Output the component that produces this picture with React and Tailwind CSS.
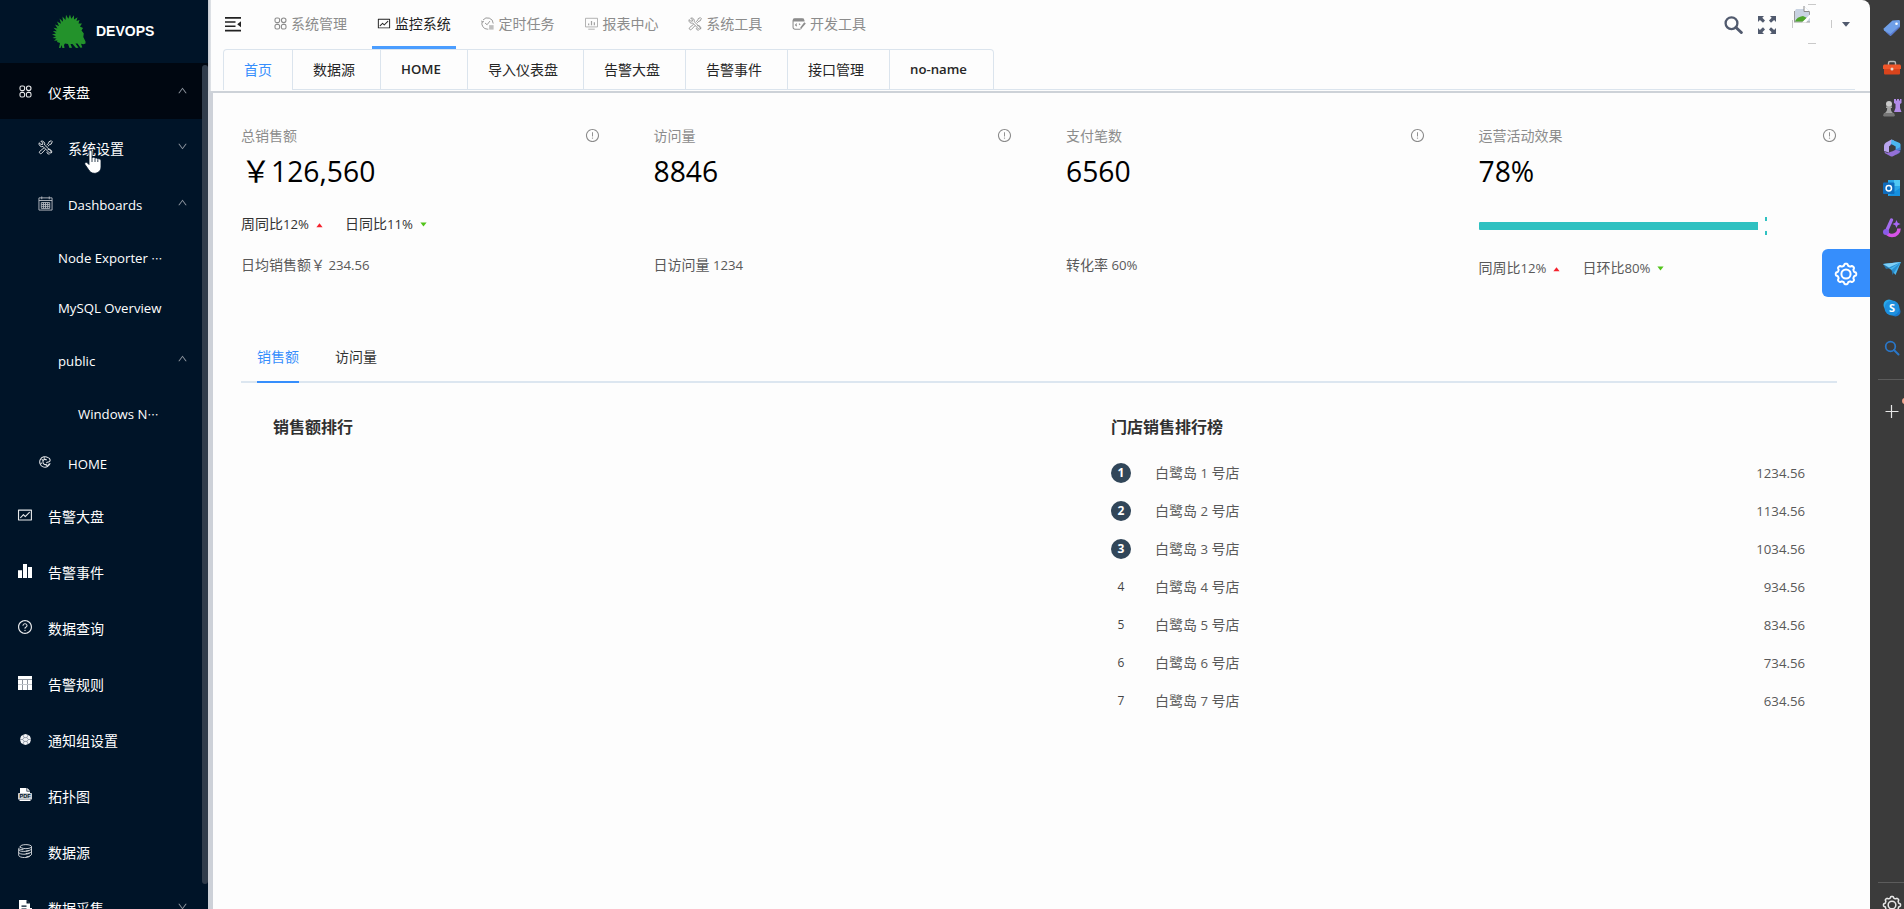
import React from "react";
import {
  AiOutlineFund,
  AiOutlineQuestionCircle,
  AiOutlineExclamationCircle,
  AiOutlineUp,
  AiOutlineDown,
} from "react-icons/ai";

/* Sets Latin runs slightly smaller than the surrounding Chinese characters. */
function T({ children }) {
  const parts = String(children).split(/([\x20-\x7e]+|\u2026)/);
  return (
    <span className="whitespace-pre">
      {parts.map((p, i) =>
        p === "\u2026" ? (
          <span key={i} className="font-['Noto_Sans_CJK_SC',sans-serif] text-[11px]" lang="zh-CN">{p}</span>
        ) : i % 2 ? (
          <span key={i} className="text-[0.943em]">{p}</span>
        ) : (
          p
        )
      )}
    </span>
  );
}

const Svg = ({ size = 14, children, className = "", box = 16, ...rest }) => (
  <svg width={size} height={size} viewBox={`0 0 ${box} ${box}`} fill="none" stroke="currentColor" className={className} {...rest}>
    {children}
  </svg>
);

const GEAR = (() => {
  let d = "";
  for (let i = 0; i < 160; i++) {
    const a = (i / 160) * Math.PI * 2;
    const r = 9.3 + 0.95 * Math.tanh(2.2 * Math.cos(8 * a));
    d += `${i ? "L" : "M"}${(12 + r * Math.sin(a)).toFixed(2)} ${(12 - r * Math.cos(a)).toFixed(2)}`;
  }
  return d + "Z";
})();
const Gear = ({ size, weight = 2 }) => (
  <Svg size={size} box={24} strokeWidth={weight} strokeLinejoin="round">
    <path d={GEAR} />
    <circle cx="12" cy="12" r="4.6" />
  </Svg>
);

const Clover = () => (
  <Svg size={13} box={13} strokeWidth="1.1">
    <rect x="1" y="1" width="4.600" height="4.600" rx="1.600" />
    <rect x="7.400" y="1" width="4.600" height="4.600" rx="2.300" />
    <rect x="1" y="7.400" width="4.600" height="4.600" rx="1.600" />
    <rect x="7.400" y="7.400" width="4.600" height="4.600" rx="1.600" />
  </Svg>
);
const Tools = ({ size = 14 }) => (
  <Svg size={size} strokeWidth="1">
    <path d="M5.4 6.900 12 13.600a1.200 1.200 0 0 0 1.800-1.700L7 5.300a3.100 3.100 0 0 0-3.900-4L5 3.200v1.500H3.200L1.200 3a3.200 3.200 0 0 0 4.200 3.900Z" />
    <path d="m9.200 5.600 2.100-2.300.4-1.500L14.200.800l1 1-1.200 2.600-1.500.4-2.100 2M6.400 8.300l-4.700 4a1.500 1.500 0 0 0 2 2.100l4.300-4.500" />
    <path d="M10.400 10.100a3 3 0 0 1 4 3.900M12.200 15.200a3 3 0 0 1-2.900-2.500" />
  </Svg>
);
const Calendar = () => (
  <Svg size={15} strokeWidth="1">
    <path d="M1 2h14v13H1zM1 4.800h14M4 .5v3M12 .5v3M3.500 7h9v6.200h-9zM3.500 9h9M3.500 11h9M5.800 7v6M8 7v6M10.300 7v6" />
  </Svg>
);
const Cookie = () => (
  <Svg size={12} strokeWidth="1.4">
    <path d="M14.800 9.500A7 7 0 1 1 12 2.200M12.300 2.200c3 1.500 3.300 4.500 1 5.500-1.500.600-3 .300-3.300 1.800" />
    <path d="M10.200 5.500c-2-2-5-.800-5 2.300s2.800 4.700 5 3M3.500 4.500l1.800 1.200M2 10l2-.8M7 1.500v2M9.500 12.500l3.500-.500M12.500 10.500l1 1" />
  </Svg>
);
const Bars = () => (
  <Svg size={14}>
    <path fill="#fff" stroke="none" d="M0 7h4.600v9H0zM5.700 0h4.600v16H5.700zM11.400 3.500H16V16h-4.600z" />
  </Svg>
);
const Grid = () => (
  <Svg size={14} box={14}>
    <path fill="#fff" stroke="none" d="M0 0h14v14H0z" />
    <path stroke="#8d949d" strokeWidth="1" d="M0 3.500h14M4.500 4v10M9.500 4v10" />
    <path stroke="#c3c7cc" strokeWidth="1" d="M0 8.500h14" />
  </Svg>
);
const Ball = () => (
  <Svg size={11} box={10}>
    <path fill="#f2f3f5" stroke="none" d="M5 0 7 .6 9 1.800 9.400 3 10 5 9.400 7 9 8.200 7 9.400 5 10 3 9.400 1 8.200.600 7 0 5 .600 3 1 1.800 3 .600Z" />
    <path stroke="#6b7686" strokeWidth=".6" d="M3.700 3.300h2.600L7.600 5 6.300 6.700H3.700L2.400 5ZM3.700 3.300 2.800 1M6.300 3.300 7.200 1M7.600 5H10M6.300 6.700l.9 2.300M3.700 6.700 2.800 9M2.400 5H0" />
  </Svg>
);
const Pdf = () => (
  <svg width="14" height="14" viewBox="0 0 14 14">
    <path fill="#fff" d="M2 0h6.500v3.500H12V6H2ZM9.200 0 12 2.800H9.200Z" />
    <rect x="0" y="5" width="14" height="6.500" rx=".6" fill="#c9cdd2" />
    <path fill="#fff" d="M1.500 11.500h11V13h-11z" />
    <text x="7" y="10.300" textAnchor="middle" fontSize="5.600" fontWeight="700" fontFamily="Liberation Sans, sans-serif" fill="#001428">PDF</text>
  </svg>
);
const Database = () => (
  <Svg size={14} strokeWidth="1">
    <ellipse cx="9" cy="3" rx="6.500" ry="2.300" />
    <path d="M15.500 3v8.500c0 1.500-2.500 2.800-6 3.200M2.500 3v1.500M15.300 5.800c-.500 1.500-3.500 2.300-6.500 2.300M15.300 8.600c-.500 1.500-3.500 2.300-6.500 2.300M1 6.500c0 1.300 2.500 2 5.500 2s5-.7 6.500-1.500M.800 5v8c0 1.300 3 2.500 6.500 2.500 2.500 0 4.500-.5 6-1.200M.800 9.700c.5 1.300 3 2 6 2s5-.5 6.500-1.300M.800 5c.5 1 2.800 1.500 5.500 1.500" />
  </Svg>
);
const FileIcon = () => (
  <svg width="14" height="14" viewBox="0 0 14 14">
    <path fill="#fff" d="M1 0h7.500L12 3.500V8h2v2h-2v4H1z" />
    <path fill="#001428" d="M8.500 0v3.500H12zM3.500 5.500h5v1.300h-5zM3.500 8.500h5v1h-5z" />
  </svg>
);
const Clock = () => (
  <Svg size={13} strokeWidth="1.100">
    <path d="M9 15H8A7 7 0 0 1 1.500 5.500M2.500 3.700A7 7 0 0 1 15 8M.8 4.500l.8 1.800 2-.8M5 7.500l2.500 2L11 5" />
    <path fill="currentColor" stroke="none" opacity=".55" d="M10 10h5.500v5.500H10z" />
  </Svg>
);
const Monitor = () => (
  <Svg size={13} strokeWidth="1" opacity=".8">
    <path d="M.6 1.600h14.800v10.600H.600zM4 15h8" />
    <path strokeWidth="1.500" d="M4.500 10V8M8 10V5M11.500 10V6.500" />
  </Svg>
);
const DevIcon = () => (
  <Svg size={14} strokeWidth="1.200">
    <path d="M9.500 14H3.500A2.200 2.200 0 0 1 1.200 11.800V4A2.200 2.200 0 0 1 3.500 2h8A2.200 2.200 0 0 1 13.700 4v1M1.200 4.400h12.500M5.500 7.500 4 9l1.500 1.500M8 7.500l1.300 1.500" />
    <path fill="currentColor" stroke="none" d="M1.500 2h12v2.700h-12zM14 6l1.800 1.500-4 4.500-1.800 2.500-.500-2.500Z" />
  </Svg>
);

const Hedgehog = () => (
  <svg width="34" height="34" viewBox="0 0 34 34" fill="#23922b">
    <path d="M7 34 8 29 5 28 5.500 26.500 2 26.800 4.500 24.500.500 24 4 22.300 0 20.500 4 19.600.800 17 4.800 17.200 1.500 13.800 5.500 14.500 3 10.500 7 12 5 7.500 9 9.800 7.500 4.500 11 7.800 10.500 2.500 13.500 6 14 .800 16.300 4.800 18 .500 19.300 4.800 22 1.200 22 5.600 25.500 3.200 24.500 7 27.500 6 26.500 9.500 30 9.500 28 12.500 31 14 29.500 16.500 31.800 19.500 31.300 23 33.500 27.500 33.500 29.500 31.500 30.300 29 29.800 30.300 33.500 28.500 33.800 25.500 29.500 23.500 29.500 26.500 33.800 24 34 20.500 30 18.500 30 20 33.800 17.500 34 16 30 13 29.500 12 31 12.500 34 10.300 34 9.800 31 8.500 34Z" />
  </svg>
);

const MENU = [
  { t: "仪表盘", i: <Clover />, h: 56, l: 0, a: "up", on: true },
  { t: "系统设置", i: <Tools size={15} />, h: 56, l: 1, a: "down" },
  { t: "Dashboards", i: <Calendar />, h: 56, l: 1, a: "up", dim: true },
  { t: "Node Exporter …", h: 50, l: 2 },
  { t: "MySQL Overview", h: 50, l: 2 },
  { t: "public", h: 56, l: 2, a: "up" },
  { t: "Windows N…", h: 50, l: 3 },
  { t: "HOME", i: <Cookie />, h: 50, l: 1 },
  { t: "告警大盘", i: <AiOutlineFund size={16} />, h: 56, l: 0 },
  { t: "告警事件", i: <Bars />, h: 56, l: 0 },
  { t: "数据查询", i: <AiOutlineQuestionCircle size={16} />, h: 56, l: 0 },
  { t: "告警规则", i: <Grid />, h: 56, l: 0 },
  { t: "通知组设置", i: <Ball />, h: 56, l: 0 },
  { t: "拓扑图", i: <Pdf />, h: 56, l: 0 },
  { t: "数据源", i: <Database />, h: 56, l: 0 },
  { t: "数据采集", i: <FileIcon />, h: 56, l: 0, a: "down" },
];
const PAD = ["pl-[17px]", "pl-[37px]", "pl-[58px]", "pl-[78px]"];

function Sidebar() {
  return (
    <aside className="relative flex w-[208px] shrink-0 flex-col overflow-hidden bg-[#001428] text-white">
      <div className="flex h-[63px] shrink-0 items-center pb-[1px] pl-[52px]">
        <Hedgehog />
        <span className="ml-[10px] font-['Liberation_Sans',sans-serif] text-[14px] font-bold">DEVOPS</span>
      </div>
      {MENU.map((m) => (
        <div
          key={m.t}
          className={`flex shrink-0 items-center ${m.h === 56 ? "h-[56px]" : "h-[50px]"} ${PAD[m.l]} ${m.on ? "bg-[#000711]" : ""}`}
        >
          {m.i && (
            <span className={`mr-[15px] flex w-4 shrink-0 justify-center ${m.dim ? "text-[#b3b9c0]" : "text-[#e6e8ea]"}`}>{m.i}</span>
          )}
          <span className="pt-[4px] text-[14px] leading-[20px]"><T>{m.t}</T></span>
          {m.a && (
            <span className="mr-[20px] ml-auto pb-[2px] text-[#8b939d]">
              {m.a === "up" ? <AiOutlineUp size={11} /> : <AiOutlineDown size={11} />}
            </span>
          )}
        </div>
      ))}
      <div className="absolute top-[65px] right-0 h-[819px] w-[6px] rounded-full bg-[#303c4b]" />
      <svg className="absolute top-[150px] left-[84px]" width="18" height="24" viewBox="0 0 18 24">
        <path
          fill="#fff"
          stroke="#001428"
          strokeWidth=".8"
          d="M5 1.500C5 .5 6 0 7 .3c.700.200 1 .800 1 1.500v6c.300-.900 2.500-.900 3 .500.700-.700 2.300-.500 2.700.800.800-.600 2.300-.400 3 .700.300.400.300 1 .300 2V17c0 3.500-2.800 6.300-6.500 6.300-3 0-4.700-1.500-6-3.800L1 14.500c-.700-1.300.500-2.600 1.800-2 .800.300 1.500 1.200 2.200 2Z"
        />
        <path stroke="#001428" strokeWidth=".8" d="M8 7.500V12M11 8.500V12M13.800 9.500V12" />
      </svg>
    </aside>
  );
}

const NAV = [
  ["系统管理", <Clover key="a" />],
  ["监控系统", <AiOutlineFund key="b" size={15} />],
  ["定时任务", <Clock key="c" />],
  ["报表中心", <Monitor key="d" />],
  ["系统工具", <Tools key="e" />],
  ["开发工具", <DevIcon key="f" />],
];
const TABS = [
  ["首页", "w-[70px]"],
  ["数据源", "w-[88px]"],
  ["HOME", "w-[87px]"],
  ["导入仪表盘", "w-[116px]"],
  ["告警大盘", "w-[102px]"],
  ["告警事件", "w-[102px]"],
  ["接口管理", "w-[102px]"],
  ["no-name", "w-[104px]"],
];

function Header() {
  return (
    <header className="flex h-[93px] shrink-0 flex-col border-b-2 border-[#cdd2d8] pl-[15px]">
      <div className="flex h-[49px] shrink-0 items-center">
        <svg className="ml-[2px]" width="17" height="15" viewBox="0 0 17 15" fill="#222">
          <path d="M0 0h16v1.700H0zM0 4.200h10.500v1.600H0zM0 8.500h10.500v1.600H0zM0 12.700h16v1.700H0zM16 4.300v6l-3.800-3z" />
        </svg>
        <nav className="ml-[26px] flex h-full gap-[19.800px]">
          {NAV.map(([t, icon], i) => (
            <div
              key={t}
              className={`flex h-full w-[84px] items-center border-b-[3px] pt-[1px] pl-[5px] text-[14px] ${
                i === 1 ? "border-[#4a9dff] text-[#222]" : "border-transparent text-[#8c8c8c]"
              }`}
            >
              <span className="mr-1 flex w-[14px] justify-center">{icon}</span>
              {t}
            </div>
          ))}
        </nav>
        <div className="mr-5 ml-auto flex items-center text-[#515a6e]">
          <svg width="19" height="18" viewBox="0 0 19 18" fill="none" stroke="currentColor">
            <circle cx="7.500" cy="7.200" r="5.900" strokeWidth="2.300" />
            <path d="m12 11.500 5.300 5" strokeWidth="3" strokeLinecap="round" />
          </svg>
          <svg className="ml-[15px]" width="18" height="18" viewBox="0 0 18 18" fill="currentColor">
            <path d="M0 0h6L4.300 1.700 7 4.400 5 6.700 1.900 4 0 6zM18 0v6l-1.900-2L13 6.700l-2-2.300 2.700-2.700L12 0zM0 18v-6l1.900 2L5 11.300l2 2.300-2.700 2.700L6 18zM18 18h-6l1.700-1.700L11 13.600l2-2.300 3.100 2.700 1.900-2z" />
          </svg>
          <svg className="-mt-[2px] ml-4" width="40" height="40" viewBox="0 0 40 40">
            <path d="M16 .5h8M.5 16v8M39.500 16v8M16 39.500h8" stroke="#c9c9c9" fill="none" />
            <path d="M2 8.500 4 5h8V2l6 5.500V18H2z" fill="#c9d3e2" />
            <path d="M12 2v5.500h5.500" fill="#fff" stroke="#8b8b8b" />
            <path d="M2.500 7v11M2 18h16M17.500 8v3" stroke="#999" fill="none" />
            <path d="M3 17.500c1-3 4-5 8-5.500l4 2-4 3.500z" fill="#4ea52c" />
            <path d="M10 18.500 18.500 10v3L14 18.500z" fill="#fff" />
          </svg>
          <svg className="ml-[10px]" width="8" height="5" viewBox="0 0 8 5" fill="currentColor">
            <path d="M0 0h8L4 4.800z" />
          </svg>
        </div>
      </div>
      <div className="mr-[15px] flex h-[41px] shrink-0">
        {TABS.map(([t, w], i) => (
          <div
            key={t}
            className={`flex shrink-0 items-center border-t border-r border-[#dbe4ed] pb-[1px] text-[14px] ${w} ${
              i === 0 ? "rounded-tl border-l pl-[20px] text-[#368efc]" : "border-b pl-[20px] text-[#262626]"
            } ${i === 7 ? "rounded-tr" : ""} ${i === 2 || i === 7 ? "font-semibold" : ""}`}
          >
            <T>{t}</T>
          </div>
        ))}
        <div className="grow border-b border-[#dbe4ed]" />
      </div>
    </header>
  );
}

const Up = () => (
  <svg className="mt-[2px] ml-[7px]" width="7" height="5" viewBox="0 0 7 5"><path fill="#f5222d" d="M3.500.300 6.600 4.300H.400z" /></svg>
);
const Down = () => (
  <svg className="ml-[7px]" width="7" height="5" viewBox="0 0 7 5"><path fill="#52c41a" d="M3.500 4.500.400.500h6.200z" /></svg>
);

const Trend = ({ a, b, className }) => (
  <div className={`flex h-[22px] items-center text-[14px] ${className}`}>
    <T>{a}</T>
    <Up />
    <span className="ml-[22px]"><T>{b}</T></span>
    <Down />
  </div>
);

function Stat({ label, value, children }) {
  return (
    <div className="flex h-[172px] flex-col">
      <div className="-mt-[1px] flex h-[22px] items-center justify-between text-[14px] text-[#8c8c8c]">
        {label}
        <AiOutlineExclamationCircle size={15} />
      </div>
      <div className="mt-[6px] flex h-[38px] items-center text-[30px] leading-[38px] text-black"><T>{value}</T></div>
      {children}
    </div>
  );
}

const Foot = ({ children }) => (
  <div className="flex h-[22px] items-center text-[14px] text-[#595959]"><T>{children}</T></div>
);

const SHOPS = ["1234.56", "1134.56", "1034.56", "934.56", "834.56", "734.56", "634.56"];

function Content() {
  return (
    <main className="flex grow flex-col border-l-[5px] border-[#cdd1d8] pt-[32px] pr-[33px] pl-[28px]">
      <section className="grid grid-cols-4 gap-x-[54px]">
        <Stat label="总销售额" value="￥126,560">
          <Trend a="周同比12%" b="日同比11%" className="mt-[23px] text-[#333]" />
          <div className="mt-[19px]"><Foot>日均销售额￥ 234.56</Foot></div>
        </Stat>
        <Stat label="访问量" value="8846">
          <div className="mt-[64px]"><Foot>日访问量 1234</Foot></div>
        </Stat>
        <Stat label="支付笔数" value="6560">
          <div className="mt-[64px]"><Foot>转化率 60%</Foot></div>
        </Stat>
        <Stat label="运营活动效果" value="78%">
          <div className="mt-[27px] flex h-[18px] items-center gap-[7px]">
            <div className="h-2 w-[279px] rounded-l-[1px] bg-[#2fc1c1]" />
            <div className="flex h-full w-[2px] flex-col justify-between">
              <div className="h-1 bg-[#2fc1c1]" />
              <div className="h-1 bg-[#2fc1c1]" />
            </div>
          </div>
          <Trend a="同周比12%" b="日环比80%" className="mt-[22px] text-[#595959]" />
        </Stat>
      </section>
      <section className="mt-[39px] flex h-[47px] border-b-2 border-[#dce6f0] pl-4 text-[14px]">
        <div className="mr-9 -mb-[2px] flex w-[42px] justify-center border-b-2 border-[#368efc] pt-[10px] leading-[22px] text-[#368efc]">销售额</div>
        <div className="pt-[10px] leading-[22px] text-[#333]">访问量</div>
      </section>
      <section className="flex pt-[32px]">
        <h4 className="ml-8 w-[838px] text-[16px] leading-[24px] font-bold text-[#303030]">销售额排行</h4>
        <div className="mr-8 grow">
          <h4 className="text-[16px] leading-[24px] font-bold text-[#303030]">门店销售排行榜</h4>
          <ul className="mt-[15px]">
            {SHOPS.map((v, i) => (
              <li key={v} className="flex h-[38px] items-center text-[14px] text-[#595959]">
                <span className={`mr-6 flex h-5 w-5 items-center justify-center rounded-full text-[12px] ${i < 3 ? "bg-[#314659] font-bold text-white" : "text-[#444]"}`}>
                  {i + 1}
                </span>
                <T>{`白鹭岛 ${i + 1} 号店`}</T>
                <span className="ml-auto"><T>{v}</T></span>
              </li>
            ))}
          </ul>
        </div>
      </section>
    </main>
  );
}

const Rail = ({ children }) => (
  <div className="flex h-10 w-[20px] shrink-0 items-center justify-center">
    <svg width="20" height="20" viewBox="0 0 20 20" className="shrink-0">{children}</svg>
  </div>
);

function EdgeRail() {
  return (
    <aside className="flex h-full w-[34px] shrink-0 flex-col overflow-hidden bg-[#3b3b3b] pt-[8px] pl-[12px]">
      <Rail>
        <path fill="#6f9fe8" d="M10.500 2.500 17 2l1 .800v6L9.500 17.300a1.500 1.500 0 0 1-2 0L2 12.300a1.500 1.500 0 0 1 0-2z" />
        <path fill="#5878cf" d="m3 13 5.500 5 9-8.500V8L8.500 16z" />
        <circle cx="14.500" cy="5.700" r="1.300" fill="#fff" />
      </Rail>
      <Rail>
        <path d="M6.500 7V5a1.500 1.500 0 0 1 1.500-1.500h4A1.500 1.500 0 0 1 13.500 5v2" stroke="#b9b9b9" strokeWidth="1.400" fill="none" />
        <path fill="#f0562a" d="M1 7.500 2 6.500h16l1 1V11H1z" />
        <path fill="#d9441c" d="M2 11h16v4.500a1 1 0 0 1-1 1H3a1 1 0 0 1-1-1z" />
        <circle cx="10" cy="11" r="1.500" fill="#e8d5cc" />
      </Rail>
      <Rail>
        <path fill="#b28be8" d="M12 1h2v1.500h1V1h2v1.500h1V1h1.500v4l-1.500 1v4l1.500 4H12l1.500-4V6L12 5z" />
        <circle cx="7" cy="6" r="3" fill="#c9c9c9" />
        <path fill="#a6a6a6" d="M4 8.500h6v1.500H8.800c0 2 .7 4 2.200 5H3c1.500-1 2.200-3 2.200-5H4z" />
        <path fill="#767676" d="M2 15h10l1 2.500-1 1H2l-1-1z" />
      </Rail>
      <Rail>
        <path fill="#b9a5ee" d="M9.500 1.500 4 4.500A4 4 0 0 0 2 8v5l5 1.500V9l5-6.500z" />
        <path fill="#4bb5f0" d="m9.500 1.500 7 3A3 3 0 0 1 18.500 8v4l-5 1V8.500L9 6z" />
        <path fill="#4066c9" d="m7 9 2-3 4.500 2.500v3l5-2.500v4c0 1-.5 1.800-1.500 2.500l-3 1.500z" opacity=".6" />
        <path fill="#9470d8" d="M2 13c0 1 3 2 5 1.500l6.500-2.700L18 13c0 1-.5 1.700-1.500 2.300L11 18.200a3 3 0 0 1-2.500 0L3 15.200z" />
        <path fill="#3b3b3b" d="m10 6.700 3.300 1.800v3.300L10 13.500l-3-1.700V8.500z" />
      </Rail>
      <Rail>
        <path fill="#2aa7e8" d="M6 2h12v16H6z" />
        <path fill="#50c8f5" d="M12 2h6v6h-6z" />
        <path fill="#1590df" d="m6 18 12-8v8z" />
        <rect x="1" y="4.500" width="11.500" height="11.500" rx="1" fill="#0f6cbd" />
        <circle cx="6.800" cy="10.200" r="2.700" stroke="#fff" strokeWidth="1.500" fill="none" />
      </Rail>
      <Rail>
        <path d="M4 12c0 3 2.500 5.500 6 5.500 4 0 7-3 7-7" stroke="#d653e8" strokeWidth="3.600" fill="none" />
        <path d="M9.500 2 4.500 13" stroke="#a56df0" strokeWidth="3.200" strokeLinecap="round" />
        <circle cx="4" cy="14" r="3" fill="#8a5be8" />
        <path fill="#a868f5" d="m14.500 2 1.200 2.800L18.500 6l-2.800 1.200L14.500 10l-1.200-2.800L10.500 6l2.800-1.200z" />
      </Rail>
      <Rail>
        <path fill="#48b5ee" d="M1 6 19 4l-5.500 13-4-5z" />
        <path fill="#2184c7" d="m9.500 12 1 5L19 4zM4 11l5-1L19 4 1 6z" opacity=".75" />
        <path fill="#7fd0f7" d="M19 4 1 6l6 3.500z" />
      </Rail>
      <Rail>
        <circle cx="7" cy="7" r="5.500" fill="#28a8ea" />
        <circle cx="13.500" cy="13.500" r="5" fill="#1878ce" />
        <circle cx="10" cy="10" r="7.500" fill="#1d90df" />
        <text x="10" y="14" textAnchor="middle" fontSize="11" fontWeight="700" fontFamily="Open Sans, sans-serif" fill="#fff">S</text>
      </Rail>
      <Rail>
        <circle cx="8.500" cy="8.500" r="4.800" stroke="#2a77c9" strokeWidth="1.700" fill="none" />
        <path d="m12 12 4.500 4.500" stroke="#2a77c9" strokeWidth="2" strokeLinecap="round" />
      </Rail>
      <div className="mt-[11px] -ml-1 h-px w-[26px] shrink-0 bg-[#5c5c5c]" />
      <div className="relative mt-[11px]">
        <Rail><path d="M3.500 10.500h13M9.500 4v13" stroke="#e8e8e8" strokeWidth="1.200" /></Rail>
        <div className="absolute top-[7px] left-[20px] h-[6px] w-[6px] rounded-full bg-[#f2a58c]" />
      </div>
      <div className="mt-auto -ml-1 h-px w-[26px] shrink-0 bg-[#5c5c5c]" />
      <div className="h-[26px] shrink-0 pt-[12px] text-[#e8e8e8]">
        <Gear size={20} weight={1.8} />
      </div>
    </aside>
  );
}

export default function App() {
  return (
    <div className="flex h-[909px] w-[1904px] overflow-hidden bg-[#3b3b3b] font-['Open_Sans','Noto_Sans_CJK_SC',sans-serif]">
      <div className="relative flex grow overflow-hidden rounded-tr-lg bg-[#fdfdfd]">
        <Sidebar />
        <div className="flex min-w-0 grow flex-col">
          <Header />
          <Content />
        </div>
        <div className="absolute top-[249px] right-0 flex h-12 w-12 items-center justify-center rounded-l-md bg-[#368efc] pt-[2px] text-white">
          <Gear size={24} weight={2} />
        </div>
        <div className="absolute top-0 left-[208px] h-[91px] w-[3px] bg-gradient-to-r from-[#c3c7ce] to-[#e2e5e9]" />
      </div>
      <EdgeRail />
    </div>
  );
}
